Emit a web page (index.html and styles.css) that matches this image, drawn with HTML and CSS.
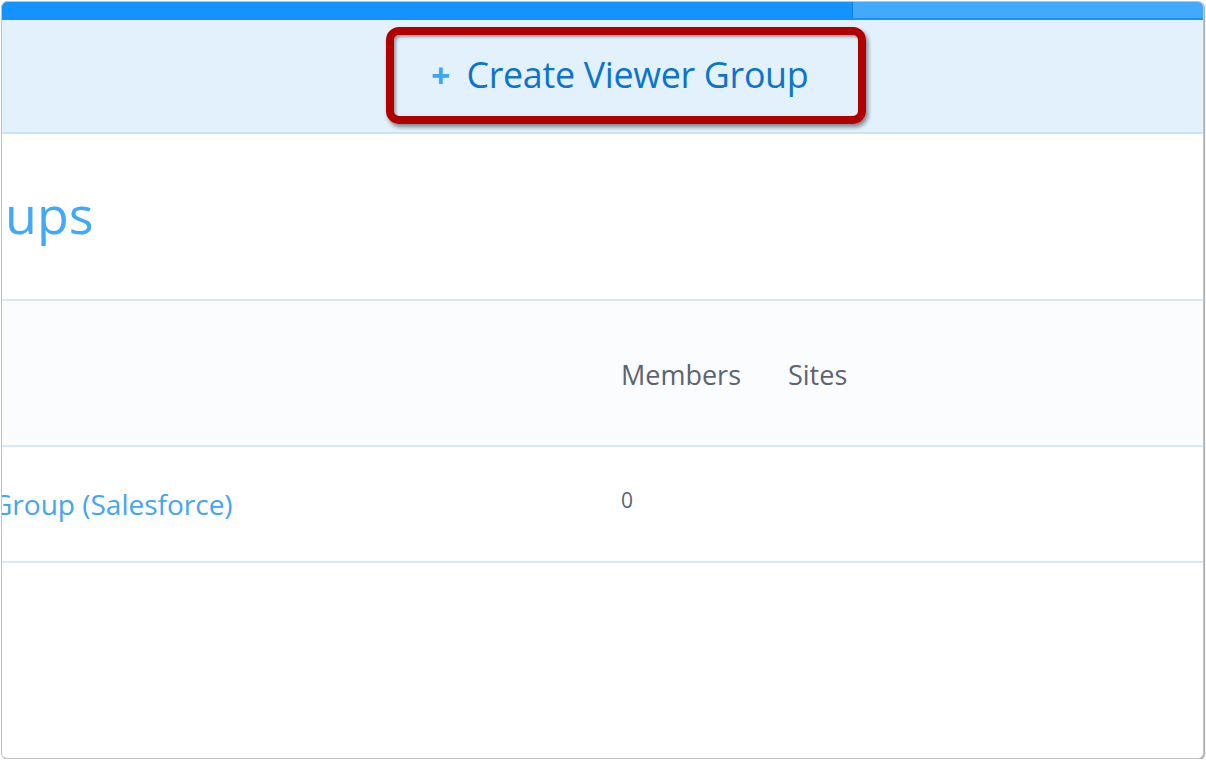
FILE: index.html
```html
<!DOCTYPE html>
<html lang="en">
<head>
<meta charset="utf-8">
<title>Viewer Groups</title>
<link rel="stylesheet" href="styles.css">
</head>
<body>
<div class="window">
  <div class="topbar">
    <div class="seg seg-dark"></div>
    <div class="seg seg-light"></div>
  </div>
  <div class="actionbar">
    <div class="callout">
      <span class="plus">+</span>
      <span class="btn-label">Create Viewer Group</span>
    </div>
  </div>
  <div class="title-area">
    <h1 class="title">ups</h1>
  </div>
  <div class="table">
    <div class="row head">
      <div class="cell"></div>
      <div class="cell">Members</div>
      <div class="cell">Sites</div>
    </div>
    <div class="row body-row">
      <div class="cell name"><a class="link" href="#">Group (Salesforce)</a></div>
      <div class="cell num">0</div>
      <div class="cell"></div>
    </div>
  </div>
</div>
</body>
</html>
```
FILE: styles.css
```css
* { box-sizing: border-box; }
html, body { margin: 0; padding: 0; background: #ffffff; }
body { font-family: "Open Sans", "Noto Sans", sans-serif; }

.window {
  margin: 1px 0 0 1px;
  width: 1203px;
  height: 758px;
  border: 1px solid #c2c2c2;
  border-radius: 6px;
  overflow: hidden;
  background: #ffffff;
  box-shadow: 1px 1px 1px rgba(0,0,0,0.35);
}

.topbar {
  display: flex;
  height: 18px;
  border-bottom: 2px solid #1592fb;
}
.seg { height: 100%; }
.seg-dark { width: 851px; background: #1592fb; border-right: 1px solid #0d80e2; }
.seg-light { flex: 1; background: #43a9fb; }

.actionbar {
  height: 114px;
  background: #e3f1fc;
  border-bottom: 2px solid #c8e3f6;
  padding: 7px 0 0 384px;
}
.callout {
  width: 480px;
  height: 97px;
  border: 8px solid #b00000;
  border-radius: 13px;
  box-shadow: 2px 3px 4px rgba(0,0,0,0.45), inset 2px 2px 3px rgba(0,0,0,0.35);
  display: flex;
  align-items: center;
  padding-left: 37px;
  padding-bottom: 2px;
}
.plus {
  color: #3fa6f7;
  font-size: 34px;
  font-weight: 700;
  line-height: 1;
  margin-right: 16px;
}
.btn-label {
  color: #0b74d0;
  font-size: 35.8px;
  line-height: 1;
  letter-spacing: -0.3px;
}

.title-area {
  height: 167px;
  overflow: hidden;
  border-bottom: 2px solid #d6e9f8;
  padding-left: 3px;
}
.title {
  margin: 49px 0 0 0;
  font-weight: 400;
  font-size: 52px;
  line-height: 1.2;
  color: #42a8f8;
  white-space: nowrap;
}

.row {
  display: grid;
  grid-template-columns: 619px 167px 1fr;
  align-items: center;
  border-bottom: 2px solid #d6e9f8;
}
.row.head {
  height: 146px;
  background: #fafcfe;
  color: #5b6472;
  font-size: 27px;
  padding-top: 2px;
}
.row.body-row {
  height: 116px;
}
.cell { white-space: nowrap; overflow: hidden; }
.link {
  color: #42a5f5;
  text-decoration: none;
  font-size: 28px;
  display: inline-block;
  margin-left: -10px;
}
.num {
  color: #5b6472;
  font-size: 21px;
  margin-top: -8px;
}
```
